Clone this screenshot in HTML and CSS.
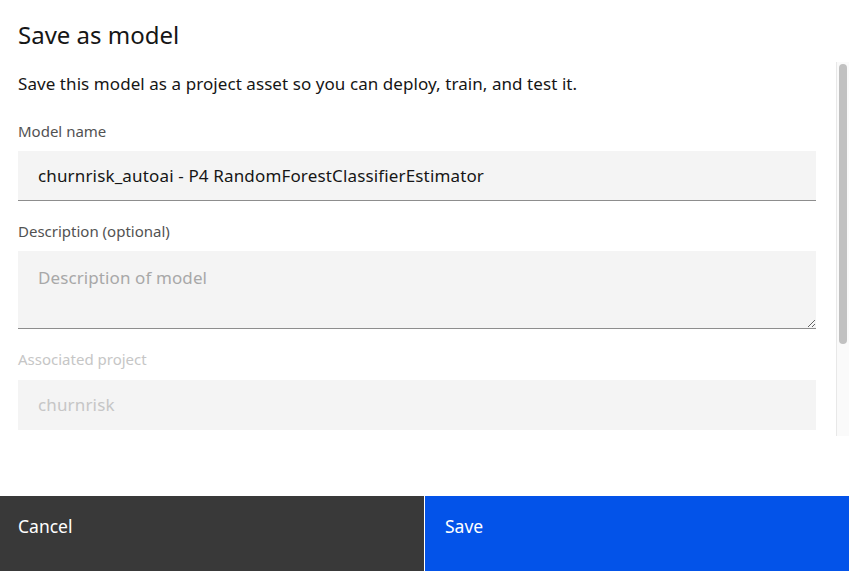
FILE: index.html
```html
<!DOCTYPE html>
<html lang="en">
<head>
<meta charset="utf-8">
<title>Save as model</title>
<link rel="stylesheet" href="styles.css">
</head>
<body>
<div class="modal">
  <header class="modal-header">
    <h2 class="modal-title">Save as model</h2>
  </header>
  <div class="modal-body">
    <div class="modal-content">
      <p class="intro">Save this model as a project asset so you can deploy, train, and test it.</p>
      <div class="field field-name">
        <label class="label" for="name">Model name</label>
        <input id="name" class="input" type="text" value="churnrisk_autoai - P4 RandomForestClassifierEstimator">
      </div>
      <div class="field field-desc">
        <label class="label" for="desc">Description (optional)</label>
        <textarea id="desc" class="textarea" placeholder="Description of model"></textarea>
      </div>
      <div class="field field-project">
        <label class="label label-disabled" for="proj">Associated project</label>
        <input id="proj" class="input input-disabled" type="text" value="churnrisk" disabled>
      </div>
    </div>
    <div class="scrollbar" aria-hidden="true"><div class="scrollbar-thumb"></div></div>
  </div>
  <footer class="modal-footer">
    <button class="btn btn-secondary" type="button">Cancel</button>
    <button class="btn btn-primary" type="button">Save</button>
  </footer>
</div>
</body>
</html>
```

FILE: styles.css
```css
* { box-sizing: border-box; }
html, body { margin: 0; padding: 0; background: #ffffff; }
body {
  font-family: "Noto Sans", "Open Sans", sans-serif;
  color: #161616;
}
.modal {
  height: 571px;
  display: flex;
  flex-direction: column;
}
.modal-header {
  padding: 19px 18px 11px;
  flex: none;
}
.modal-title {
  margin: 0;
  font-size: 24px;
  line-height: 32px;
  font-weight: 400;
  color: #161616;
}
.modal-body {
  flex: none;
  height: 374px;
  display: flex;
}
.modal-content {
  flex: 1;
  min-width: 0;
  overflow: hidden;
  padding: 10px 20px 0 18px;
}
.scrollbar {
  flex: none;
  width: 13px;
  background: #fafafa;
  border-left: 1px solid #e8e8e8;
  padding: 2px 2px 0 2px;
}
.scrollbar-thumb {
  height: 280px;
  background: #c1c1c1;
  border-radius: 4px;
}
.intro {
  margin: 0;
  font-size: 17px;
  line-height: 24px;
  letter-spacing: 0.07px;
}
.field { display: flex; flex-direction: column; }
.field-name { margin-top: 26px; }
.field-desc { margin-top: 21px; }
.field-project { margin-top: 21px; }
.label {
  font-size: 15px;
  line-height: 18px;
  color: #525252;
  margin-bottom: 11px;
}
.label-disabled { color: #c6c6c6; margin-bottom: 12px; }
.input {
  height: 50px;
  border: none;
  border-bottom: 1px solid #8d8d8d;
  background: #f4f4f4;
  padding: 0 20px;
  font: inherit;
  font-size: 17px;
  letter-spacing: 0.15px;
  color: #161616;
  outline: none;
}
.input-disabled {
  height: 50px;
  border-bottom-color: transparent;
  color: #c6c6c6;
}
.textarea {
  height: 78px;
  border: none;
  border-bottom: 1px solid #8d8d8d;
  background: #f4f4f4;
  padding: 15px 20px;
  font: inherit;
  font-size: 17px;
  letter-spacing: 0.1px;
  line-height: 24px;
  color: #161616;
  resize: vertical;
  outline: none;
}
.textarea::placeholder { color: #a8a8a8; }
.modal-footer {
  margin-top: auto;
  height: 75px;
  display: grid;
  grid-template-columns: 1fr 1fr;
  column-gap: 1px;
  flex: none;
}
.btn {
  border: none;
  display: flex;
  align-items: flex-start;
  padding: 20px 18px;
  font: inherit;
  font-size: 17.5px;
  line-height: 20px;
  color: #ffffff;
  cursor: pointer;
}
.btn-secondary { background: #393939; }
.btn-primary { background: #0353e9; padding-left: 20px; }
```
